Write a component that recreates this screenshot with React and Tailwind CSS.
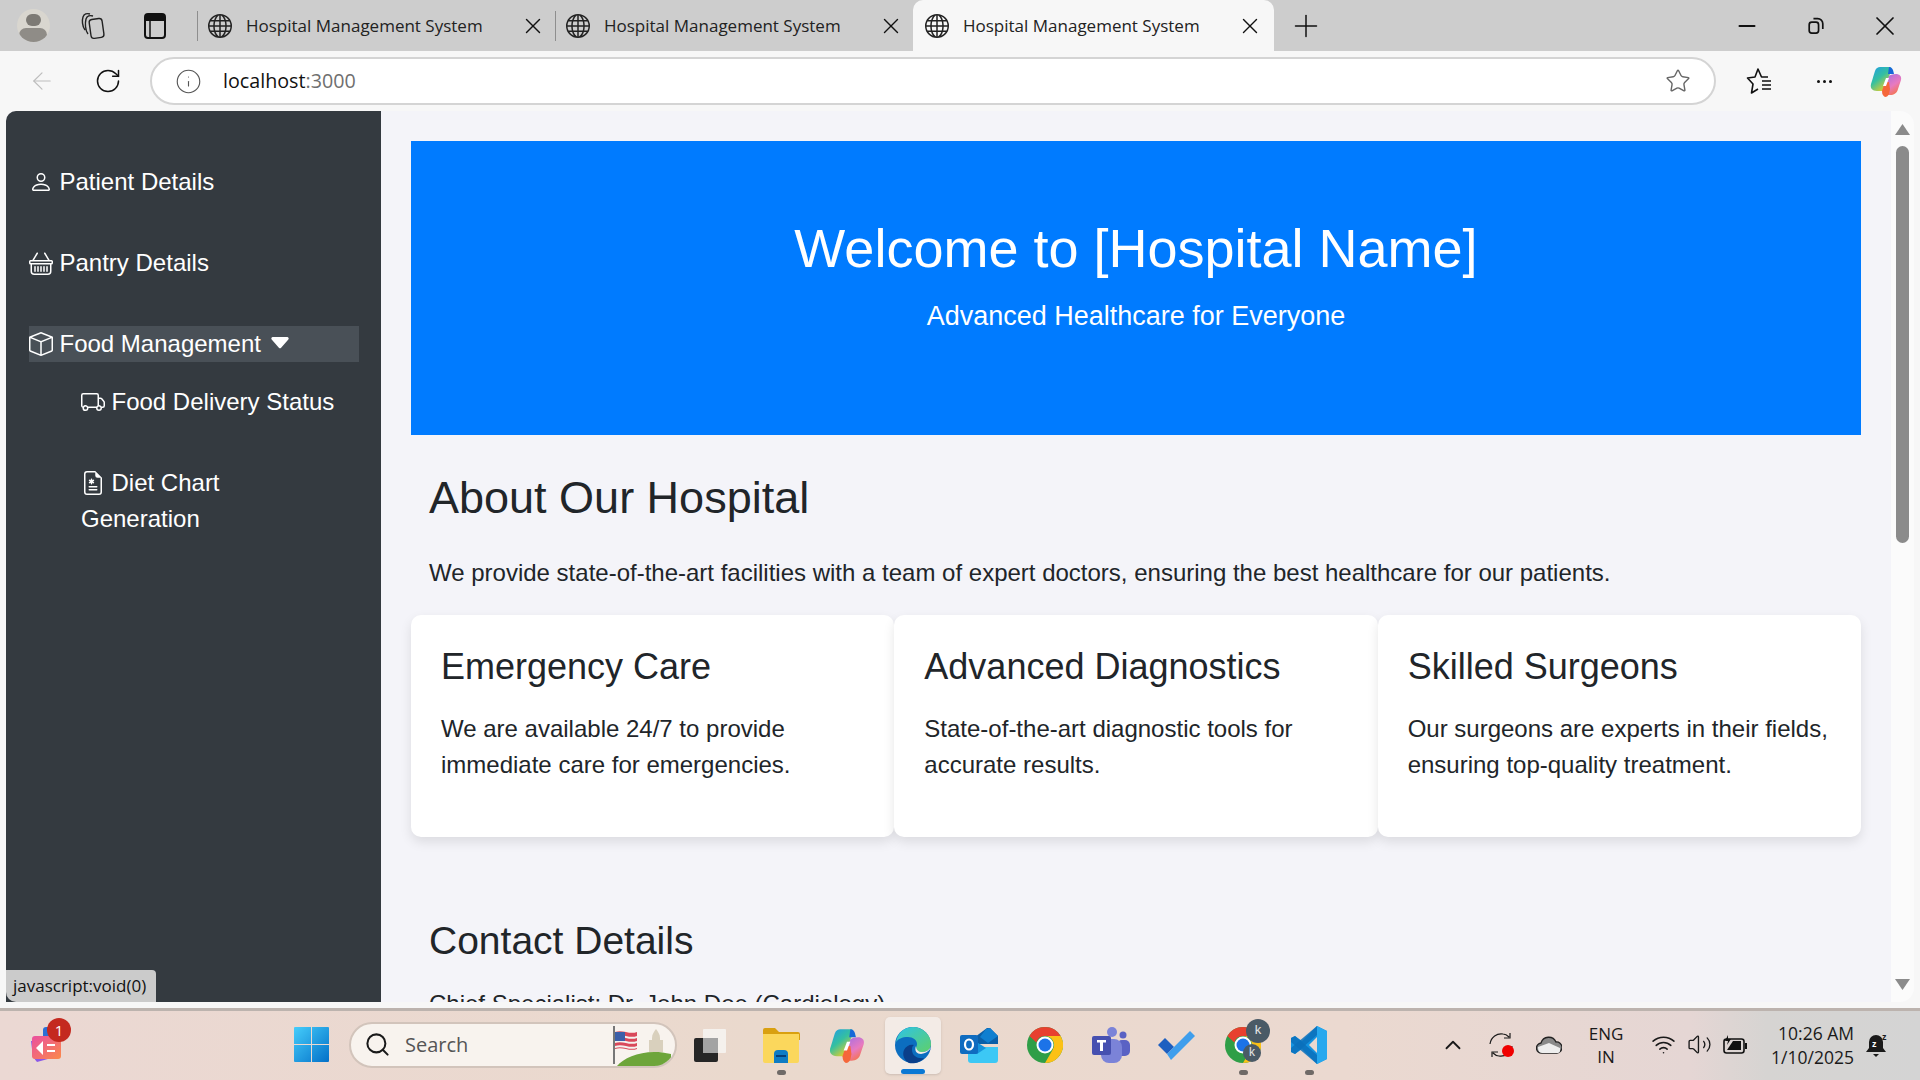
import React from 'react';
import { X, Plus, ArrowLeft, RotateCw, Info, Star, Minus, Wifi, Volume2, ChevronUp, Search } from 'lucide-react';
import { BsPerson, BsBasket, BsBox, BsTruck, BsFileEarmarkMedical, BsCaretDownFill, BsGlobe } from 'react-icons/bs';

const uiFont = "font-['Open_Sans','Noto_Sans',sans-serif]";

const Tab = ({ active }) => (
  <div
    className={`flex items-center h-[51px] shrink-0 relative ${
      active ? 'w-[361px] bg-[#f7f7f7] rounded-t-[10px] pl-[12px]' : 'w-[358px]'
    }`}
  >
    {!active && <div className="w-px h-[30px] bg-[#8e8e8e] mr-[10px]" />}
    <BsGlobe size={24} className="text-[#222] shrink-0" />
    <span className={`${uiFont} text-[17px] text-[#222] ml-[14px] w-[274px] whitespace-nowrap`}>Hospital Management System</span>
    <X size={26} strokeWidth={1.3} className="text-[#111] shrink-0" />
  </div>
);

const CopilotIcon = ({ size = 34, id }) => (
  <svg width={size} height={size} viewBox="0 0 34 34">
    <defs>
      <linearGradient id={`${id}a`} x1="0" y1="0" x2="0.7" y2="1">
        <stop offset="0" stopColor="#1f9ce8" />
        <stop offset="0.5" stopColor="#35c0a0" />
        <stop offset="1" stopColor="#f4d020" />
      </linearGradient>
      <linearGradient id={`${id}b`} x1="0.2" y1="0" x2="0.8" y2="1">
        <stop offset="0" stopColor="#a86fe0" />
        <stop offset="0.55" stopColor="#e87ac0" />
        <stop offset="1" stopColor="#f7733a" />
      </linearGradient>
    </defs>
    <path d="M11 3h9c2 0 3 1 2 4l-7 20H8c-5 0-7-3-6-7l4-13c1-3 3-4 5-4z" fill={`url(#${id}a)`} />
    <path d="M20 3c2 0 3 1 4 3l1 4h-6l1-7z" fill="#1668d8" />
    <path d="M27 10c3 0 6 2 5 6l-3 9c-1 4-4 6-8 6h-5c-2 0-3-1-2-3l6-16c1-1 3-2 7-2z" fill={`url(#${id}b)`} />
    <path d="M16 18l-3 9c0 3 1 5 3 6 2 0 3-1 4-3l1-5-1-7z" fill="#f5673a" />
    <path d="M17 14h3l-3 8h-3z" fill="#fff" />
  </svg>
);

const WindowsLogo = () => (
  <svg width="35" height="35" viewBox="0 0 35 35">
    <defs>
      <linearGradient id="win" x1="0" y1="0" x2="1" y2="1">
        <stop offset="0" stopColor="#45cdfb" />
        <stop offset="1" stopColor="#0370c8" />
      </linearGradient>
    </defs>
    <path d="M0 1a1 1 0 011-1h16v17H0zM18 0h16a1 1 0 011 1v16H18zM0 18h17v17H1a1 1 0 01-1-1zM18 18h17v16a1 1 0 01-1 1H18z" fill="url(#win)" />
  </svg>
);

const TaskView = () => (
  <svg width="38" height="38" viewBox="0 0 38 38">
    <rect x="3" y="12" width="24" height="24" rx="2" fill="#262626" />
    <rect x="12" y="3" width="23" height="24" rx="1" fill="#f6f3f1" fillOpacity="0.9" />
    <rect x="12" y="12" width="15" height="15" fill="#a3a3a3" />
  </svg>
);

const Explorer = () => (
  <svg width="38" height="36" viewBox="0 0 38 36">
    <path d="M1 3a2 2 0 012-2h10l4 4h19a2 2 0 012 2v6H1z" fill="#d9a010" />
    <path d="M1 7h36v27a2 2 0 01-2 2H3a2 2 0 01-2-2z" fill="#fbd75c" />
    <path d="M12 27a4 4 0 014-4h6a4 4 0 014 4v9H12z" fill="#0f7cc4" />
    <rect x="14" y="28" width="10" height="2" fill="#063f78" />
  </svg>
);

const Edge = () => (
  <svg width="38" height="38" viewBox="0 0 38 38">
    <defs>
      <linearGradient id="edgeTop" x1="0" y1="0" x2="1" y2="1">
        <stop offset="0" stopColor="#2dc3e8" />
        <stop offset="1" stopColor="#5fd06a" />
      </linearGradient>
    </defs>
    <circle cx="19" cy="19" r="18" fill="#0c6ec0" />
    <path d="M2 16C4 6 11 1 19 1c10 0 18 8 18 17 0 5-4 8-9 8-4 0-6-2-6-4 0-1 1-2 1-4 0-4-4-7-9-7-6 0-10 2-12 5z" fill="url(#edgeTop)" />
    <path d="M15 37c-5-3-7-8-5-13 2-4 6-6 10-5-2 1-2 3-2 5 0 6 6 9 12 8-3 4-9 6-15 5z" fill="#0a3f8a" />
    <path d="M22 20c0 4 3 6 6 6 4 0 7-2 9-5-1 3-4 6-10 7-4 0-7-3-5-8z" fill="#f3ebe6" />
  </svg>
);

const Outlook = () => (
  <svg width="38" height="36" viewBox="0 0 38 36">
    <path d="M15 10L27 1h3l8 8v8H15z" fill="#0a5fa8" />
    <path d="M26 2l4-1 8 8-10 7-8-6z" fill="#0f7fd0" />
    <path d="M8 20h30v13a3 3 0 01-3 3H11a3 3 0 01-3-3z" fill="#3cc8f5" />
    <path d="M15 14l11 7-9 6-9-6z" fill="#1594dc" />
    <rect x="0" y="8" width="18" height="19" rx="2" fill="#0f6cc0" />
    <ellipse cx="9" cy="17.5" rx="4" ry="5" fill="none" stroke="#fff" strokeWidth="2.2" />
  </svg>
);

const Chrome = ({ size = 36 }) => (
  <svg width={size} height={size} viewBox="0 0 36 36">
    <circle cx="18" cy="18" r="18" fill="#2f9e47" />
    <path d="M18 0a18 18 0 0115.6 9H18a9 9 0 00-8.6 6.4L2.4 9A18 18 0 0118 0z" fill="#e8402f" />
    <path d="M33.6 9A18 18 0 0118 36l7.8-13.5A9 9 0 0018 9z" fill="#fbc116" />
    <circle cx="18" cy="18" r="8.5" fill="#fff" />
    <circle cx="18" cy="18" r="6.5" fill="#1c73e8" />
  </svg>
);

const Teams = () => (
  <svg width="38" height="36" viewBox="0 0 38 36">
    <circle cx="20" cy="5" r="5" fill="#7b83d8" />
    <circle cx="31" cy="8" r="3.5" fill="#5a62c4" />
    <rect x="25" y="13" width="13" height="16" rx="5" fill="#5a62c4" />
    <rect x="9" y="12" width="21" height="24" rx="8" fill="#7b83d8" />
    <rect x="0" y="9" width="19" height="19" rx="2" fill="#4650b0" />
    <path d="M5 13h9v2.5h-3V24H8v-8.5H5z" fill="#fff" />
  </svg>
);

const Todo = () => (
  <svg width="38" height="30" viewBox="0 0 38 30">
    <path d="M0 15l7-7 9 9-7 7z" fill="#1c5fc0" />
    <path d="M9 24L32 1l5 5-24 24z" fill="#3f9eec" />
  </svg>
);

const VSCode = () => (
  <svg width="36" height="38" viewBox="0 0 36 38">
    <path d="M26 0l10 5v28l-10 5-15-15-7 5-4-2V12l4-2 7 5zm0 11l-8 8 8 8z" fill="#1593e0" />
    <path d="M26 0l10 5v28l-10 5z" fill="#27a8ee" />
    <path d="M0 12l4-2 22 19v9L0 16z" fill="#0a70bb" opacity="0.85" />
    <path d="M0 26l4 2 22-19V0L0 22z" fill="#0a70bb" opacity="0.85" />
  </svg>
);

const TaskIcon = ({ children, dot, active, extra }) => (
  <div className={`w-[66px] h-[70px] flex items-center justify-center relative shrink-0 ${extra || ''}`}>
    {active && <div className="absolute left-[5px] right-[5px] top-[7px] bottom-[6px] bg-[#f3ebe6] rounded-[5px] shadow-sm" />}
    <div className="relative">{children}</div>
    {dot && <div className="absolute bottom-[5px] left-[29px] w-[9px] h-[5px] rounded-full bg-[#6f6a67]" />}
    {active && <div className="absolute bottom-[6px] left-[21px] w-[24px] h-[5px] rounded-full bg-[#0a78d4]" />}
  </div>
);

const SideLink = ({ icon: Icon, children, className }) => (
  <a href="#" className={`block text-white ${className || ''}`}>
    <Icon size={24} className="inline-block align-[-4px] mr-[6.5px]" />
    {children}
  </a>
);

const Card = ({ title, children }) => (
  <div className="bg-white rounded-[10px] shadow-[0_5px_12px_rgba(0,0,0,0.1)] pt-[31px] px-[30px] pb-[30px] h-[222px]">
    <h3 className="text-[36px] leading-[42px] text-[#212529] mb-[23px]">{title}</h3>
    <p className="text-[24px] leading-[36px] text-[#212529]">{children}</p>
  </div>
);

export default function App() {
  return (
    <div className="h-screen w-screen flex flex-col overflow-hidden bg-[#f7f7f7] font-['Liberation_Sans',Arial,sans-serif]">
      {/* Tab strip */}
      <div className="h-[51px] flex items-center bg-[#cdcdcd] shrink-0">
        <div className="w-[66px] flex justify-center">
          <div className="w-[33px] h-[33px] rounded-full bg-[#d9d6cf] overflow-hidden flex flex-col items-center">
            <div className="w-[15px] h-[17px] rounded-full bg-[#7d7a75] mt-[5px]" />
            <div className="w-[28px] h-[20px] rounded-full bg-[#8f8c87] mt-[2px]" />
          </div>
        </div>
        <div className="w-[54px] flex justify-center">
          <svg width="26" height="30" viewBox="0 0 26 30" fill="none" stroke="#222" strokeWidth="1.4">
            <rect x="10" y="8" width="13" height="19" rx="3" transform="rotate(-8 16 17)" />
            <path d="M8 23C5 19 5 12 6 8c1-3 4-4 7-3M5 19C2 15 2 9 3 6c1-3 4-4 7-3" />
          </svg>
        </div>
        <div className="w-[70px] flex justify-center">
          <svg width="22" height="26" viewBox="0 0 22 26" fill="none">
            <rect x="1" y="1" width="20" height="24" rx="3" stroke="#111" strokeWidth="2" />
            <path d="M1 4a3 3 0 013-3h14a3 3 0 013 3v4H1z" fill="#111" />
            <path d="M6 8v16" stroke="#111" strokeWidth="1.5" />
          </svg>
        </div>
        <div className="w-[7px]" />
        <Tab />
        <Tab />
        <Tab active />
        <div className="w-[14px]" />
        <Plus size={36} strokeWidth={1} className="text-[#111]" />
        <div className="ml-auto flex items-center">
          <div className="w-[69px] flex justify-center"><Minus size={26} strokeWidth={1.7} className="text-[#111]" /></div>
          <div className="w-[69px] flex justify-center">
            <svg width="16" height="17" viewBox="0 0 18 20" fill="none" stroke="#111" strokeWidth="2">
              <rect x="1" y="6" width="11" height="13" rx="3" />
              <path d="M6 2h5a6 6 0 016 6v6" />
            </svg>
          </div>
          <div className="w-[70px] pr-[1px] flex justify-center"><X size={32} strokeWidth={1.3} className="text-[#111]" /></div>
        </div>
      </div>

      {/* Address bar row */}
      <div className="h-[60px] flex items-center shrink-0 bg-[#f7f7f7]">
        <div className="w-[84px] flex justify-center"><ArrowLeft size={28} strokeWidth={1} className="text-[#bdbdbd]" /></div>
        <div className="w-[48px] flex justify-center"><RotateCw size={28} strokeWidth={1.3} className="text-[#111]" /></div>
        <div className="w-[18px]" />
        <div className="w-[1566px] h-[48px] rounded-full border-2 border-[#d4d4d4] bg-white flex items-center">
          <Info size={27} strokeWidth={1} className="text-[#555] ml-[23px]" />
          <span className={`${uiFont} text-[19.7px] ml-[21px] text-[#111]`}>localhost<span className="text-[#6f6f6f]">:3000</span></span>
          <Star size={26} strokeWidth={1.3} className="text-[#666] ml-auto mr-[23px]" />
        </div>
        <div className="w-[13px]" />
        <div className="w-[60px] flex justify-center">
          <svg width="26" height="28" viewBox="0 0 26 28" fill="none" stroke="#111" strokeWidth="1.6" strokeLinejoin="round">
            <path d="M22 10h-6.500L12 2 9 10l-7.500 1L7 17l-1.500 9 6.500-4" />
            <path d="M16 14h9M16 18h9M16 22h9" />
          </svg>
        </div>
        <div className="w-[71px] flex justify-center gap-[3px]">
          <span className="w-[3px] h-[3px] bg-[#111] rounded-full" />
          <span className="w-[3px] h-[3px] bg-[#111] rounded-full" />
          <span className="w-[3px] h-[3px] bg-[#111] rounded-full" />
        </div>
        <div className="ml-[9px]"><CopilotIcon id="cop1" /></div>
      </div>

      {/* Browser viewport */}
      <div className="h-[891px] ml-[6px] mr-[6px] flex relative rounded-tl-[10px] rounded-r-[14px] overflow-hidden border-b-0 shrink-0 bg-[#f4f4f9]">
        <aside className="w-[375px] bg-[#343a40] shrink-0 pt-[53px] px-[23px] text-[24px] leading-[36px]">
          <SideLink icon={BsPerson}>Patient Details</SideLink>
          <SideLink icon={BsBasket} className="mt-[45px]">Pantry Details</SideLink>
          <div className="mt-[45px] h-[36px] bg-[#495057] text-white flex items-center w-[330px]">
            <BsBox size={24} className="mr-[6.5px]" />
            Food Management
            <BsCaretDownFill size={24} className="ml-[7px] mt-[-3px]" />
          </div>
          <div className="pl-[52px]">
            <SideLink icon={BsTruck} className="mt-[22px]">Food Delivery Status</SideLink>
            <SideLink icon={BsFileEarmarkMedical} className="mt-[45px] w-[200px]">Diet Chart Generation</SideLink>
          </div>
        </aside>

        <main className="flex-1 overflow-hidden pt-[30px] pl-[30px] pr-[30px] text-[#212529]">
          <section className="h-[294px] bg-[#007bff] text-white text-center pt-[72px]">
            <h1 className="text-[54px] leading-[70px]">Welcome to [Hospital Name]</h1>
            <p className="text-[27px] leading-[36px] mt-[15px]">Advanced Healthcare for Everyone</p>
          </section>
          <div className="px-[18px]">
            <h2 className="text-[45px] leading-[48px] mt-[39px]">About Our Hospital</h2>
            <p className="text-[24px] leading-[36px] mt-[33px]">We provide state-of-the-art facilities with a team of expert doctors, ensuring the best healthcare for our patients.</p>
          </div>
          <div className="grid grid-cols-3 mt-[24px]">
            <Card title="Emergency Care">We are available 24/7 to provide immediate care for emergencies.</Card>
            <Card title="Advanced Diagnostics">State-of-the-art diagnostic tools for accurate results.</Card>
            <Card title="Skilled Surgeons">Our surgeons are experts in their fields, ensuring top-quality treatment.</Card>
          </div>
          <div className="px-[18px]">
            <h2 className="text-[39px] leading-[48px] mt-[80px]">Contact Details</h2>
            <p className="text-[24px] leading-[36px] mt-[21px]">Chief Specialist: Dr. John Doe (Cardiology)</p>
          </div>
        </main>

        {/* Scrollbar */}
        <div className="w-[23px] shrink-0 bg-[#fbfbfb] flex flex-col items-center pt-[13px] pb-[12px]">
          <svg width="15" height="11" viewBox="0 0 15 11"><path d="M7.5 0L15 11H0z" fill="#8b8b8b" /></svg>
          <div className="w-[13px] h-[397px] rounded-full bg-[#8b8b8b] mt-[11px]" />
          <svg width="15" height="11" viewBox="0 0 15 11" className="mt-auto"><path d="M7.5 11L15 0H0z" fill="#8b8b8b" /></svg>
        </div>

        {/* Hover status bubble */}
        <div className={`absolute left-0 bottom-0 w-[150px] h-[32px] bg-[#cbcbcb] rounded-tr-[4px] rounded-bl-[10px] pl-[7px] ${uiFont} text-[17px] leading-[32px] text-[#111] whitespace-nowrap`}>
          javascript:void(0)
        </div>
      </div>

      <div className="h-[6px] shrink-0 bg-[#f7f7f7]" />

      {/* Windows taskbar */}
      <div className="h-[72px] shrink-0 flex items-center pb-[2px] border-t-[3px] border-[#bcb3ae] bg-[linear-gradient(90deg,#ebd8d3,#ead9cd_40%,#ebd9d0_70%,#e5d6d4_88%,#d6d4d2_92%,#d4d4d4)]">
        <div className="w-[94px] flex justify-center relative shrink-0">
          <svg width="36" height="36" viewBox="0 0 36 36">
            <defs>
              <linearGradient id="widg" x1="0" y1="0" x2="1" y2="1">
                <stop offset="0" stopColor="#ea4fa0" />
                <stop offset="1" stopColor="#fb8a4a" />
              </linearGradient>
            </defs>
            <rect x="14" y="0" width="16" height="18" rx="3" fill="#2a6fd6" />
            <path d="M2 14h24v16L8 35 4 30z" fill="#8a58e8" />
            <rect x="3" y="9" width="29" height="23" rx="3" fill="url(#widg)" />
            <path d="M7 21l7-7v14zM18 17h8v2h-8zM18 23h8v2h-8z" fill="#fff" />
          </svg>
          <div className="absolute left-[47px] top-[-9px] w-[24px] h-[24px] rounded-full bg-[#c4291f] text-white text-[15px] leading-[24px] text-center font-['Open_Sans',sans-serif]">1</div>
        </div>
        <div className="ml-[200px] shrink-0 flex"><WindowsLogo /></div>
        <div className="ml-[20px] w-[328px] h-[46px] shrink-0 rounded-full bg-[#f8f3ee] border-2 border-[#d2c4bb] flex items-center overflow-hidden">
          <Search size={27} strokeWidth={1.8} className="text-[#1a1a1a] ml-[13px]" />
          <span className={`${uiFont} text-[20px] text-[#555] ml-[14px]`}>Search</span>
          <svg width="62" height="42" viewBox="0 0 62 42" className="ml-auto">
            <path d="M0 2h2v38H0z" fill="#777" />
            <path d="M2 8c8-3 14 3 22 0v17c-8 3-14-3-22 0z" fill="#d9485a" />
            <path d="M2 12c8-3 14 3 22 0v2c-8 3-14-3-22 0zM2 17c8-3 14 3 22 0v2c-8 3-14-3-22 0zM2 22c8-3 14 3 22 0v2c-8 3-14-3-22 0z" fill="#f4f1ee" />
            <path d="M2 8h10v9H2z" fill="#3c5fa8" />
            <path d="M39 14c0-4 2-6 4-9 2 3 4 5 4 9v2h3v12H36V16h3z" fill="#d9d0bd" />
            <path d="M4 42c8-10 30-18 54-12v12z" fill="#6da53a" />
          </svg>
        </div>
        <TaskIcon><TaskView /></TaskIcon>
        <TaskIcon dot extra="ml-[5px]"><Explorer /></TaskIcon>
        <TaskIcon><CopilotIcon id="cop2" size={38} /></TaskIcon>
        <TaskIcon active><Edge /></TaskIcon>
        <TaskIcon><Outlook /></TaskIcon>
        <TaskIcon><Chrome /></TaskIcon>
        <TaskIcon><Teams /></TaskIcon>
        <TaskIcon><Todo /></TaskIcon>
        <TaskIcon dot>
          <Chrome />
          <div className="absolute left-[21px] top-[-8px] w-[24px] h-[24px] rounded-full bg-[#4a5a66] text-[#e6e6e6] text-[13px] leading-[22px] text-center">k</div>
          <div className="absolute left-[18px] top-[17px] w-[18px] h-[18px] rounded-full bg-[#4a5a66] text-[#e6e6e6] text-[12px] leading-[17px] text-center">k</div>
        </TaskIcon>
        <TaskIcon dot><VSCode /></TaskIcon>

        <div className={`ml-auto pr-[18px] flex items-center shrink-0 text-[#1a1a1a] ${uiFont}`}>
          <div className="w-[46px] flex justify-center"><ChevronUp size={26} strokeWidth={1.7} /></div>
          <div className="w-[50px] flex justify-center relative">
            <svg width="26" height="26" viewBox="0 0 26 26" fill="none" stroke="#1a1a1a" strokeWidth="1.2">
              <path d="M2 12C3 5 9 1 15 2c2 0 4 1 6 3M22 1v5h-6M24 14c-1 7-7 11-13 10-2 0-4-1-6-3M4 25v-5h6" />
            </svg>
            <div className="absolute left-[26px] top-[13px] w-[12px] h-[12px] rounded-full bg-[#f00000]" />
          </div>
          <div className="w-[46px] flex justify-center">
            <svg width="26" height="18" viewBox="0 0 26 18">
              <path d="M6 17a5 5 0 01-1-10 8 8 0 0115-1 5.500 5.500 0 011 11z" fill="#8a8a8a" stroke="#222" strokeWidth="1.3" />
              <path d="M2 11l11-4 11 5 0 3c0 1-1 2-2 2H6c-3 0-4-3-4-6z" fill="#eee" />
            </svg>
          </div>
          <div className="w-[68px] text-center text-[17px] leading-[23px]">ENG<br />IN</div>
          <div className="w-[46px] flex justify-center"><Wifi size={25} strokeWidth={1.5} /></div>
          <div className="w-[26px] flex justify-center"><Volume2 size={25} strokeWidth={1.3} /></div>
          <div className="w-[46px] flex justify-center">
            <svg width="25" height="20" viewBox="0 0 25 20" fill="none">
              <rect x="1" y="4" width="20" height="14" rx="2.500" stroke="#111" strokeWidth="1.6" />
              <path d="M23 8v6" stroke="#111" strokeWidth="2" />
              <path d="M4 15l6-9h8v9z" fill="#111" />
              <path d="M5 0L2 6h3l-1 4 4-6H5z" fill="#111" />
            </svg>
          </div>
          <div className="w-[96px] text-right text-[17.5px] leading-[24px] whitespace-nowrap">10:26 AM<br />1/10/2025</div>
          <div className="w-[48px] flex justify-center">
            <svg width="24" height="26" viewBox="0 0 24 26">
              <path d="M10 3a7 7 0 017 7v6l3 4H0l3-4v-6a7 7 0 017-7z" fill="#1a1a1a" />
              <path d="M7 22h6l-3 3z" fill="#1a1a1a" />
              <text x="6" y="15" fontSize="9" fontWeight="700" fill="#fff" fontFamily="'Liberation Sans',sans-serif">z</text>
              <text x="16" y="8" fontSize="9" fontWeight="700" fill="#1a1a1a" fontFamily="'Liberation Sans',sans-serif">z</text>
            </svg>
          </div>
        </div>
      </div>
    </div>
  );
}
